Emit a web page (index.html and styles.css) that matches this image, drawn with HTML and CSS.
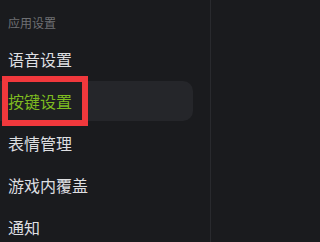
FILE: index.html
```html
<!DOCTYPE html>
<html lang="zh-CN">
<head>
<meta charset="utf-8">
<title>应用设置</title>
<link rel="stylesheet" href="styles.css">
</head>
<body>
<nav class="sidebar">
  <div class="group-title">应用设置</div>
  <ul class="menu">
    <li class="item">语音设置</li>
    <li class="item active"><span class="label">按键设置</span></li>
    <li class="item">表情管理</li>
    <li class="item">游戏内覆盖</li>
    <li class="item">通知</li>
  </ul>
</nav>
</body>
</html>
```

FILE: styles.css
```css
html, body {
  margin: 0;
  padding: 0;
  background: #1a1b1e;
  height: 100%;
  overflow: hidden;
}
body {
  font-family: "Noto Sans CJK SC", "Noto Sans", sans-serif;
}
.sidebar {
  width: 211px;
  height: 100%;
  box-sizing: border-box;
  border-right: 1px solid #292a2e;
  padding-top: 17px;
}
.group-title {
  font-size: 12px;
  line-height: 12px;
  height: 12px;
  color: #6f7074;
  padding-left: 8px;
  margin-bottom: 10px;
}
.menu {
  list-style: none;
  margin: 0;
  padding: 0;
  display: flex;
  flex-direction: column;
  gap: 2px;
}
.item {
  position: relative;
  width: 193px;
  height: 40px;
  box-sizing: border-box;
  padding-left: 8px;
  display: flex;
  align-items: center;
  font-size: 16px;
  color: #dedfe1;
  border-radius: 0 10px 10px 0;
}
.item.active {
  background: #25262a;
  color: #7dbb20;
}
.item.active::before {
  content: "";
  position: absolute;
  left: 2px;
  top: -5px;
  width: 86px;
  height: 50px;
  box-sizing: border-box;
  border: 6px solid #f0383c;
  background: #1e1f22;
}
.label {
  position: relative;
  z-index: 1;
}
```
